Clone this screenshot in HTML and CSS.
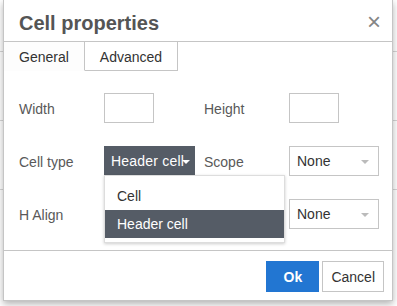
FILE: index.html
```html
<!DOCTYPE html>
<html lang="en">
<head>
    <meta charset="UTF-8">
    <title>Cell properties</title>
    <link rel="stylesheet" href="styles.css">
</head>
<body>
    <div class="page">
        <div class="page-row"></div>
        <div class="page-row"></div>
        <div class="page-row"></div>
    </div>

    <div class="dialog">
        <div class="dialog-head">
            <span class="dialog-title">Cell properties</span>
            <span class="dialog-close">&times;</span>
        </div>

        <div class="tabs">
            <div class="tab active">General</div>
            <div class="tab">Advanced</div>
        </div>

        <div class="form">
            <div class="form-row">
                <label class="form-label">Width</label>
                <div class="form-input"></div>
                <label class="form-label">Height</label>
                <div class="form-input"></div>
            </div>
            <div class="form-row">
                <label class="form-label">Cell type</label>
                <div class="select open">Header cell<span class="caret"></span></div>
                <label class="form-label">Scope</label>
                <div class="select">None<span class="caret"></span></div>
            </div>
            <div class="form-row">
                <label class="form-label">H Align</label>
                <div class="spacer"></div>
                <label class="form-label"></label>
                <div class="select">None<span class="caret"></span></div>
            </div>
        </div>

        <div class="menu">
            <div class="menu-item">Cell</div>
            <div class="menu-item selected">Header cell</div>
        </div>

        <div class="dialog-foot">
            <button class="btn btn-primary">Ok</button>
            <button class="btn">Cancel</button>
        </div>
    </div>
</body>
</html>
```

FILE: styles.css
```css
html, body {
    overflow: hidden;
}
body {
    margin: 0;
    background: #fff;
    font-family: 'Liberation Sans', Arial, sans-serif;
    width: 397px;
    height: 306px;
}
.page {
    padding-top: 51px;
}
.page-row {
    height: 68px;
    border-top: 1px solid #d6d6d6;
}
.dialog {
    position: absolute;
    left: 3px;
    top: 0;
    width: 388px;
    height: 300px;
    background: #fff;
    border: 1px solid #c5c5c5;
    border-top: none;
    box-shadow: 0 3px 7px rgba(0,0,0,0.3);
    display: flex;
    flex-direction: column;
}
.dialog-head {
    height: 41px;
    display: flex;
    align-items: center;
    justify-content: space-between;
    padding: 0 11px 0 15px;
    border-bottom: 1px solid #c5c5c5;
}
.dialog-title {
    font-size: 20px;
    font-weight: bold;
    color: #555;
    margin-top: 5px;
}
.dialog-close {
    font-size: 24px;
    color: #858585;
    font-weight: 300;
    margin-top: 3px;
}
.tabs {
    display: flex;
    height: 29px;
}
.tab {
    padding: 1px 15px 0;
    line-height: 28px;
    font-size: 14px;
    color: #333;
    border-right: 1px solid #c5c5c5;
    border-bottom: 1px solid #c5c5c5;
}
.tab.active {
    border-bottom-color: transparent;
    background: #fdfdfd;
}
.form {
    padding: 22px 0 0 15px;
    display: flex;
    flex-direction: column;
    gap: 23px;
}
.form-row {
    display: grid;
    grid-template-columns: 85px 100px 85px 90px;
    align-items: center;
    height: 30px;
}
.form-label {
    font-size: 14px;
    color: #595959;
    padding-top: 1px;
}
.form-input {
    width: 48px;
    height: 28px;
    border: 1px solid #c5c5c5;
}
.select {
    position: relative;
    width: 74px;
    height: 28px;
    line-height: 29px;
    padding-left: 7px;
    padding-right: 7px;
    border: 1px solid #c5c5c5;
    font-size: 14px;
    color: #333;
    white-space: nowrap;
}
.select.open {
    width: 78px;
    background: #555c66;
    border-color: #555c66;
    color: #fff;
    padding-left: 6px;
    padding-right: 5px;
    letter-spacing: 0.2px;
}
.caret {
    position: absolute;
    right: 9px;
    top: 13px;
    border-left: 4px solid transparent;
    border-right: 4px solid transparent;
    border-top: 4px solid #bbb;
}
.select.open .caret {
    right: 4px;
    border-top-color: #fff;
}
.menu {
    position: absolute;
    left: 100px;
    top: 175px;
    width: 179px;
    padding: 6px 0 4px;
    background: #fff;
    border: 1px solid #ddd;
    box-shadow: 0 1px 3px rgba(0,0,0,0.2);
}
.menu-item {
    height: 28px;
    line-height: 29px;
    padding-left: 12px;
    font-size: 14px;
    color: #333;
}
.menu-item.selected {
    background: #555c66;
    color: #fff;
}
.spacer {
    height: 28px;
}
.dialog-foot {
    margin-top: auto;
    height: 50px;
    border-top: 1px solid #c5c5c5;
    display: flex;
    justify-content: flex-end;
    align-items: flex-start;
    gap: 3px;
    padding: 10px 8px 0 0;
    box-sizing: border-box;
}
.btn {
    height: 31px;
    padding: 0 8px;
    border: 1px solid #c5c5c5;
    background: #fff;
    font-family: 'Liberation Sans', Arial, sans-serif;
    font-size: 14px;
    color: #333;
}
.btn-primary {
    width: 53px;
    background: #2276d2;
    border-color: #2276d2;
    color: #fff;
    font-weight: bold;
}
```
